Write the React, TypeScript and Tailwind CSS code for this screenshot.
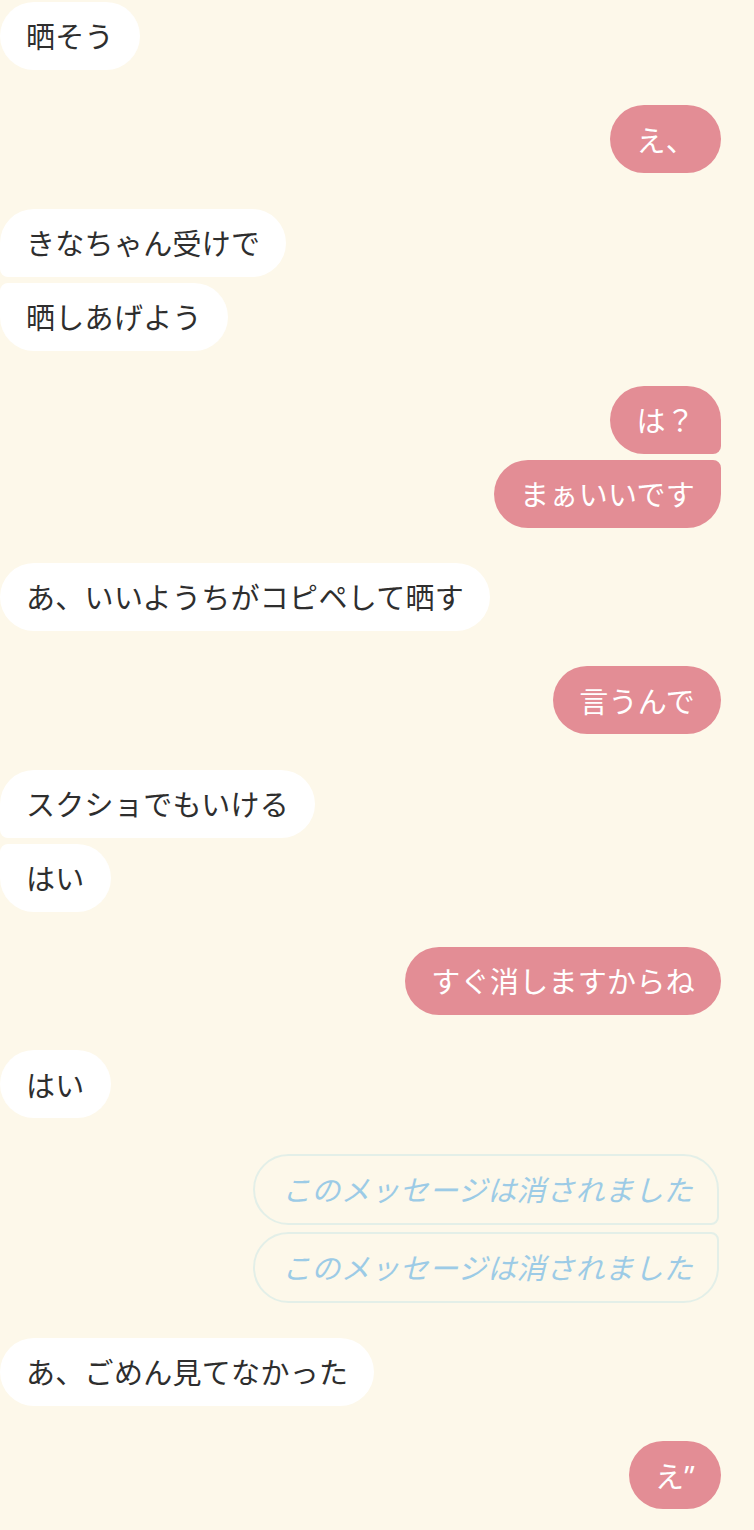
type Msg = { side: "l" | "r"; text: React.ReactNode; deleted?: boolean };

// grouped runs of messages from the same side
const groups: Msg[][] = [
  [{ side: "l", text: "晒そう" }],
  [{ side: "r", text: "え、" }],
  [
    { side: "l", text: "きなちゃん受けで" },
    { side: "l", text: "晒しあげよう" },
  ],
  [
    { side: "r", text: "は？" },
    { side: "r", text: "まぁいいです" },
  ],
  [{ side: "l", text: "あ、いいようちがコピペして晒す" }],
  [{ side: "r", text: "言うんで" }],
  [
    { side: "l", text: "スクショでもいける" },
    { side: "l", text: "はい" },
  ],
  [{ side: "r", text: "すぐ消しますからね" }],
  [{ side: "l", text: "はい" }],
  [
    { side: "r", text: "このメッセージは消されました", deleted: true },
    { side: "r", text: "このメッセージは消されました", deleted: true },
  ],
  [{ side: "l", text: "あ、ごめん見てなかった" }],
  [
    {
      side: "r",
      text: (
        <>
          え<span className="font-['Noto_Sans']">”</span>
        </>
      ),
    },
  ],
];

function cornerClass(side: "l" | "r", i: number, n: number) {
  const first = i === 0;
  const last = i === n - 1;
  if (n === 1) return "";
  if (side === "l") {
    return [!last ? "rounded-bl-[8px]" : "", !first ? "rounded-tl-[8px]" : ""].join(" ");
  }
  return [!last ? "rounded-br-[8px]" : "", !first ? "rounded-tr-[8px]" : ""].join(" ");
}

function Bubble({ msg, extra }: { msg: Msg; extra: string }) {
  if (msg.deleted) {
    return (
      <div
        className={`h-[71px] mr-[2px] flex items-center rounded-[36px] border-2 border-[#e3efe8] pl-[27px] pr-[24px] text-[#9ccbe6] italic tracking-[0.4px] ${extra}`}
      >
        {msg.text}
      </div>
    );
  }
  const tone =
    msg.side === "l" ? "bg-white text-[#2e2e2e]" : "bg-[#e38d95] text-white";
  return (
    <div className={`h-[68px] flex items-center rounded-[34px] px-[26px] ${tone} ${extra}`}>
      {msg.text}
    </div>
  );
}

export default function App() {
  return (
    <div
      className="w-[754px] min-h-[1530px] bg-[#fdf8ea] pt-[2px] pr-[33px] flex flex-col gap-[35.3px] text-[29px] tracking-[0.3px]"
      style={{ fontFamily: '"Noto Sans CJK JP", "Noto Sans", sans-serif' }}
    >
      {groups.map((g, gi) => (
        <div
          key={gi}
          className={`flex flex-col ${g[0].deleted ? "gap-[7px]" : "gap-[6px]"}`}
        >
          {g.map((m, i) => (
            <div
              key={i}
              className={`flex ${m.side === "l" ? "justify-start" : "justify-end"}`}
            >
              <Bubble msg={m} extra={cornerClass(m.side, i, g.length)} />
            </div>
          ))}
        </div>
      ))}
    </div>
  );
}
